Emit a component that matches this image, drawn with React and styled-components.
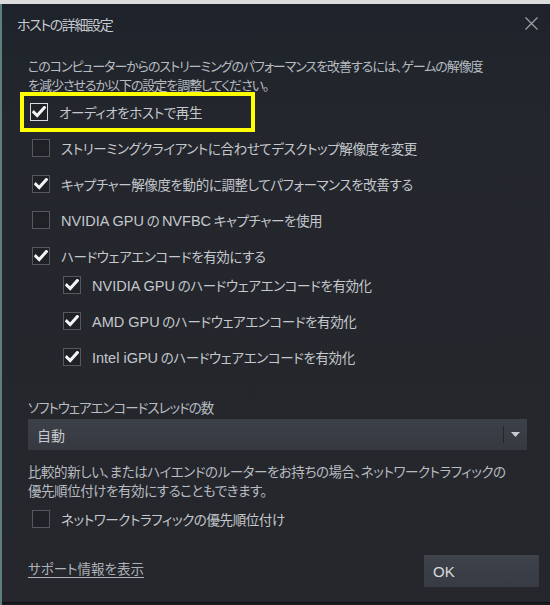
import React from 'react'
import styled, { createGlobalStyle } from 'styled-components'

const GlobalStyle = createGlobalStyle`
  html, body { margin: 0; padding: 0; background: #1a1c20; }
  body {
    font-family: "Noto Sans CJK JP", "Liberation Sans", sans-serif;
    font-feature-settings: "palt";
    -webkit-font-smoothing: antialiased;
  }
`

const mainOptions = [
  { label: 'ストリーミングクライアントに合わせてデスクトップ解像度を変更', checked: false },
  { label: 'キャプチャー解像度を動的に調整してパフォーマンスを改善する', checked: true },
  { label: 'NVIDIA GPU の NVFBC キャプチャーを使用', checked: false },
  { label: 'ハードウェアエンコードを有効にする', checked: true },
]

const encoderOptions = [
  'NVIDIA GPU のハードウェアエンコードを有効化',
  'AMD GPU のハードウェアエンコードを有効化',
  'Intel iGPU のハードウェアエンコードを有効化',
]

// latin words are set a little larger, like the UI font of the original
function MixedText({ text }) {
  return text.split(/([A-Za-z][A-Za-z ]*[A-Za-z])/).map((part, i) =>
    /^[A-Za-z]/.test(part) ? <Latin key={i}>{part}</Latin> : part
  )
}

function CheckBox({ checked, focused }) {
  return (
    <Box focused={focused}>
      {checked && (
        <svg width="14" height="12" viewBox="0 0 14 12">
          <path d="M1.8 6.2 L5.2 9.6 L12.3 1.6" fill="none" stroke="#f4f4f4" strokeWidth="3" strokeLinecap="square" />
        </svg>
      )}
    </Box>
  )
}

function Option({ label, checked, focused, indent }) {
  return (
    <Row indent={indent}>
      <CheckBox checked={checked} focused={focused} />
      <Label><MixedText text={label} /></Label>
    </Row>
  )
}

export default function App() {
  return (
    <Screen>
      <GlobalStyle />
      <TopStrip />
      <Frame>
        <SideStrip />
        <Dialog>
          <TitleBar>
            <Title>ホストの詳細設定</Title>
            <Close>
              <svg width="13" height="13" viewBox="0 0 13 13">
                <path d="M0.5 0.5 L12.5 12.5 M12.5 0.5 L0.5 12.5" stroke="#9ea2a8" strokeWidth="1.2" />
              </svg>
            </Close>
          </TitleBar>
          <Body>
            <Paragraph spacing="-1.05px" size="13px">
              このコンピューターからのストリーミングのパフォーマンスを改善するには、ゲームの解像度
              <br />
              を減少させるか以下の設定を調整してください。
            </Paragraph>
            <Highlight>
              <Option label="オーディオをホストで再生" checked focused />
            </Highlight>
            <List>
              {mainOptions.map(o => (
                <Option key={o.label} label={o.label} checked={o.checked} />
              ))}
            </List>
            <SubList>
              {encoderOptions.map(l => (
                <Option key={l} label={l} checked indent />
              ))}
            </SubList>
            <FieldLabel>ソフトウェアエンコードスレッドの数</FieldLabel>
            <Select>
              <SelectValue>自動</SelectValue>
              <SelectArrow>
                <svg width="9" height="6" viewBox="0 0 9 6">
                  <path d="M0 0 H9 L4.5 5 Z" fill="#c8cbd0" />
                </svg>
              </SelectArrow>
            </Select>
            <Paragraph top="12px" spacing="-0.45px">
              比較的新しい、またはハイエンドのルーターをお持ちの場合、ネットワークトラフィックの
              <br />
              優先順位付けを有効にすることもできます。
            </Paragraph>
            <List top="1px">
              <Option label="ネットワークトラフィックの優先順位付け" checked={false} />
            </List>
            <Footer>
              <SupportLink>サポート情報を表示</SupportLink>
              <OkButton>OK</OkButton>
            </Footer>
          </Body>
        </Dialog>
      </Frame>
    </Screen>
  )
}

const Screen = styled.div`
  width: 550px;
  height: 605px;
  display: flex;
  flex-direction: column;
  overflow: hidden;
`
const TopStrip = styled.div`
  height: 4px;
  background: #dcdcdc;
  flex-shrink: 0;
`
const Frame = styled.div`
  display: flex;
  flex: 1;
`
const SideStrip = styled.div`
  width: 2px;
  background: #5d7f7d;
`
const Dialog = styled.div`
  flex: 1;
  height: 599px;
  display: flex;
  flex-direction: column;
  background: linear-gradient(to bottom, #1e232b 0px, #23262c 110px, #25272c 100%);
  border-bottom: 1px solid #111214;
  box-sizing: border-box;
  overflow: hidden;
`
const TitleBar = styled.div`
  height: 40px;
  flex-shrink: 0;
  display: flex;
  align-items: center;
  justify-content: space-between;
  padding: 0 12px 0 15px;
`
const Title = styled.div`
  font-size: 14px;
  letter-spacing: -1.4px;
  color: #c6c9cd;
`
const Close = styled.div`
  display: flex;
  margin-top: -1px;
`
const Body = styled.div`
  flex: 1;
  display: flex;
  flex-direction: column;
  padding: 12px 23px 0 26px;
`
const Paragraph = styled.div`
  font-size: ${p => p.size || '13.5px'};
  line-height: 19px;
  letter-spacing: ${p => p.spacing || '0'};
  white-space: nowrap;
  color: #b8bcc1;
  margin-top: ${p => p.top || '0'};
`
const Highlight = styled.div`
  width: 235px;
  height: 40px;
  box-sizing: border-box;
  border: 4px solid #ffff00;
  margin: -2px 0 0 -8px;
  display: flex;
  align-items: center;
  padding-left: 2px;
`
const List = styled.div`
  display: flex;
  flex-direction: column;
  margin-top: ${p => p.top || '-2px'};
`
const Row = styled.div`
  height: 36px;
  display: flex;
  align-items: center;
  gap: 11px;
  padding-left: ${p => (p.indent ? '35px' : '4px')};
`
const Box = styled.div`
  width: 18px;
  height: 18px;
  box-sizing: border-box;
  border: 1px solid ${p => (p.focused ? '#d8dadd' : '#55585e')};
  background: #1f2126;
  display: flex;
  align-items: center;
  justify-content: center;
  flex-shrink: 0;
`
const Label = styled.span`
  font-size: 13.5px;
  letter-spacing: -0.4px;
  color: #c5c8cc;
  white-space: nowrap;
`
const Latin = styled.span`
  font-family: "Liberation Sans", sans-serif;
  font-size: 14.5px;
  letter-spacing: 0;
`
const SubList = styled.div`
  display: flex;
  flex-direction: column;
  margin-top: -7px;
`
const FieldLabel = styled.div`
  font-size: 13.5px;
  letter-spacing: -1px;
  color: #b9bdc2;
  margin-top: 22px;
  line-height: 20px;
`
const Select = styled.div`
  height: 31px;
  margin-top: 2px;
  display: flex;
  align-items: center;
  background: linear-gradient(to bottom, #3c4048, #363940);
`
const SelectValue = styled.div`
  flex: 1;
  padding-left: 9px;
  font-size: 14px;
  color: #c6c9cd;
`
const SelectArrow = styled.div`
  width: 23px;
  height: 17px;
  border-left: 1px solid #24272c;
  display: flex;
  align-items: center;
  justify-content: center;
`
const Footer = styled.div`
  display: flex;
  justify-content: space-between;
  align-items: flex-start;
  margin-top: 21px;
  margin-right: -12px;
`
const SupportLink = styled.a`
  font-size: 13.5px;
  letter-spacing: 0;
  color: #aeb2b8;
  text-decoration: underline;
  text-underline-offset: 3px;
  cursor: pointer;
  line-height: 20px;
`
const OkButton = styled.button`
  width: 115px;
  height: 32px;
  margin-top: -3px;
  border: none;
  background: linear-gradient(to bottom, #3d424b, #373b43);
  color: #d8dadd;
  font-family: "Liberation Sans", "Noto Sans CJK JP", sans-serif;
  font-size: 15px;
  text-align: left;
  padding-left: 9px;
`
